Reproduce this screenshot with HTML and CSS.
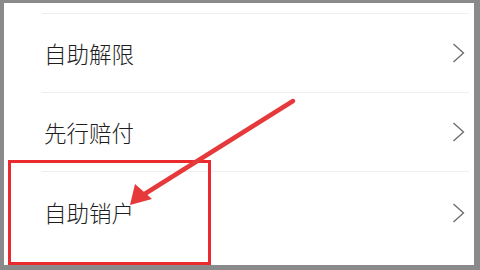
FILE: index.html
```html
<!DOCTYPE html>
<html lang="zh-CN">
<head>
<meta charset="utf-8">
<link rel="stylesheet" href="styles.css">
</head>
<body>
<div class="frame">
  <div class="list">
    <div class="row">
      <span class="label">自助解限</span>
      <svg class="chev" width="13" height="20" viewBox="0 0 13 20"><polyline points="1.5,1 11.5,10 1.5,19" fill="none" stroke="#6a6a6a" stroke-width="1.3"/></svg>
    </div>
    <div class="row">
      <span class="label">先行赔付</span>
      <svg class="chev" width="13" height="20" viewBox="0 0 13 20"><polyline points="1.5,1 11.5,10 1.5,19" fill="none" stroke="#6a6a6a" stroke-width="1.3"/></svg>
    </div>
    <div class="row row-last">
      <span class="label">自助销户</span>
      <svg class="chev" width="13" height="20" viewBox="0 0 13 20"><polyline points="1.5,1 11.5,10 1.5,19" fill="none" stroke="#6a6a6a" stroke-width="1.3"/></svg>
    </div>
  </div>
</div>
<svg class="overlay" width="480" height="270" viewBox="0 0 480 270">
  <rect x="9.5" y="161.5" width="200" height="102" fill="none" stroke="#ea2a2e" stroke-width="3"/>
  <line x1="293" y1="101" x2="143" y2="195" stroke="#e6393b" stroke-width="4.5" stroke-linecap="round"/>
  <polygon points="130,205 135,184 152,199" fill="#e6393b"/>
</svg>
</body>
</html>
```

FILE: styles.css
```css
html, body {
  margin: 0;
  padding: 0;
}
body {
  width: 480px;
  height: 270px;
  background: #8a8a8a;
  position: relative;
  overflow: hidden;
  font-family: "Noto Sans CJK SC", "Noto Sans", sans-serif;
}
.frame {
  position: absolute;
  left: 4px;
  top: 3px;
  width: 470px;
  height: 262px;
  background: #ffffff;
}
.list {
  padding-top: 10px;
}
.row {
  margin-left: 38px;
  margin-right: 5px;
  border-top: 1px solid #eeeeee;
  height: 78px;
  display: flex;
  align-items: center;
  justify-content: space-between;
  padding-left: 2px;
  padding-right: 4px;
}
.row-last {
  padding-top: 3px;
  height: 75px;
}
.label {
  font-size: 22.5px;
  font-weight: 300;
  color: #1e1e1e;
  line-height: 1;
}
.chev {
  display: block;
}
.overlay {
  position: absolute;
  left: 0;
  top: 0;
}
```
